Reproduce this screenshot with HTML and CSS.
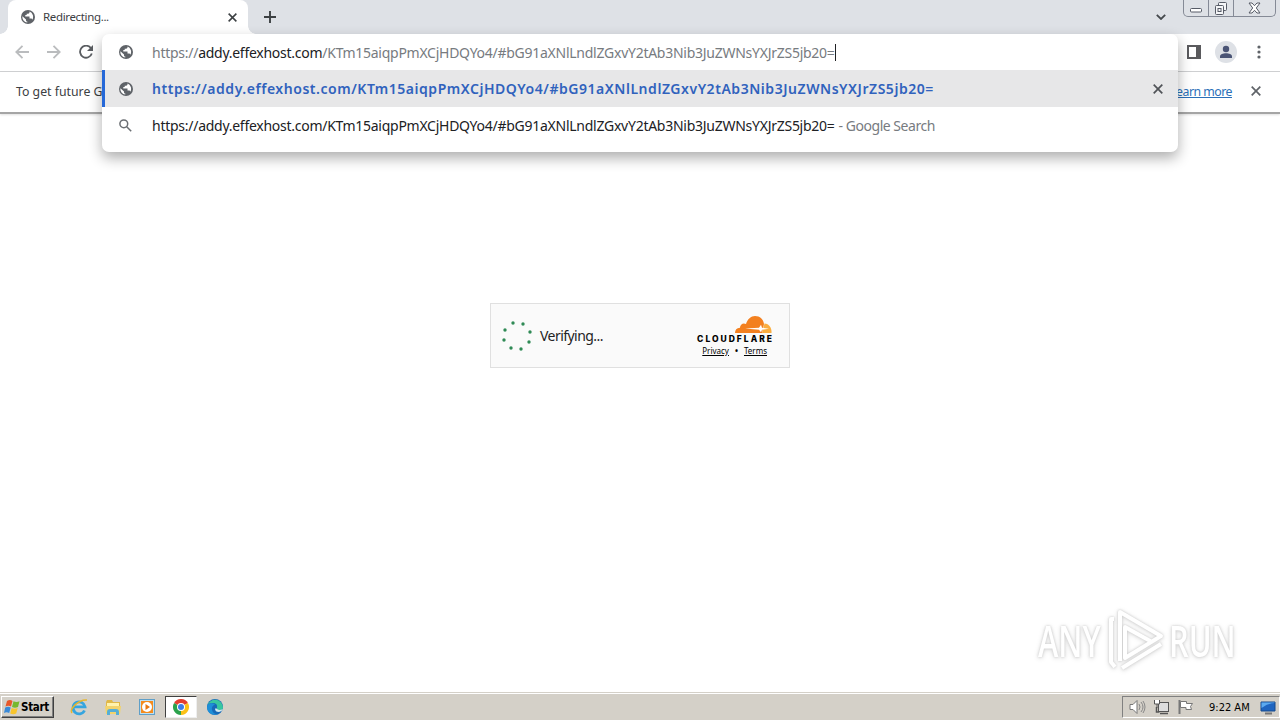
FILE: index.html
```html
<!DOCTYPE html>
<html lang="en">
    <head>
        <meta charset="utf-8">
        <title>Redirecting...</title>
        <link rel="stylesheet" href="styles.css">
    </head>
    <body>
        <svg class="defs">
            <symbol id="globe" viewBox="0 0 14 14">
                <circle cx="7" cy="7" r="7" fill="#5f6368" />
                <path d="M1.400 6.200 5 9.600v.7c0 .7.500 1.300 1.300 1.300v1A5.700 5.700 0 0 1 1.400 6.200zM8.500 1.600v.7c0 .8-.6 1.400-1.400 1.400H5.700v1.400H4.300v1.400h4.200v2.100h1.400c.7 0 1.300.5 1.400 1.200a5.700 5.700 0 0 0-2.800-8.200z" fill="#fff" />
            </symbol>
            <symbol id="cross" viewBox="0 0 10 10">
                <path d="M.7.7l8.600 8.600M9.300.7L.7 9.300" fill="none" stroke="currentColor" stroke-width="1.700" />
            </symbol>
        </svg>
        <div class="browser">
            <header class="tabstrip">
                <div class="tab">
                    <svg class="tab-icon"><use href="#globe" /></svg>
                    <span class="tab-title">Redirecting...</span>
                    <svg class="tab-close"><use href="#cross" /></svg>
                </div>
                <svg class="new-tab" viewBox="0 0 12 12"><path d="M6 0v12M0 6h12" stroke="#3c4043" stroke-width="1.900" /></svg>
                <svg class="tab-search" viewBox="0 0 10 6"><path d="M.8.8 5 5 9.200.8" fill="none" stroke="#45494d" stroke-width="1.800" /></svg>
                <div class="window-buttons">
                    <span class="wb wb-min"><svg width="13" height="6"><rect x=".5" y="1.500" width="11" height="3.500" rx="1" fill="#fff" stroke="#565b66" /></svg></span>
                    <span class="wb wb-max"><svg width="14" height="14"><g fill="#f4f5f7" stroke="#565b66"><rect x="4.500" y="1.500" width="8" height="8" rx="1" /><rect x="1.500" y="4.500" width="8" height="9" rx="1" /><rect x="4" y="7.500" width="3" height="3" /></g></svg></span>
                    <span class="wb wb-close"><svg width="13" height="12" viewBox="0 0 13 12"><path d="M1 1h3l2.500 2.700L9 1h3L8.300 6l3.700 5H9L6.500 8.300 4 11H1l3.700-5z" fill="#fff" stroke="#565b66" /></svg></span>
                </div>
            </header>
            <div class="toolbar">
                <svg class="nav-icon back" viewBox="0 0 14 14"><path d="M14 7H1.500M7.500.8 1.300 7l6.200 6.200" /></svg>
                <svg class="nav-icon forward" viewBox="0 0 14 14"><path d="M0 7h12.500M6.500.8 12.700 7l-6.200 6.200" /></svg>
                <svg class="nav-icon reload" viewBox="0 0 14 14"><path d="M11.800 3A6 6 0 1 0 12.800 8.500" /><path class="solid" d="M14 0v6H8z" /></svg>
                <div class="toolbar-right">
                    <svg width="14" height="14"><rect x="1" y="1" width="12" height="12" fill="#fff" stroke="#5a5a5d" stroke-width="2" /><rect x="9" y="0" width="5" height="14" fill="#5a5a5d" /></svg>
                    <svg class="avatar" width="22" height="22"><circle cx="11" cy="11" r="11" fill="#dee1e6" /><circle cx="11" cy="8" r="3.200" fill="#4a5475" /><path d="M5 17v-1.500c0-2 3-3.200 6-3.200s6 1.200 6 3.200V17z" fill="#4a5475" /></svg>
                    <svg width="4" height="14"><g fill="#5f6368"><circle cx="2" cy="2" r="1.600" /><circle cx="2" cy="7" r="1.600" /><circle cx="2" cy="12" r="1.600" /></g></svg>
                </div>
            </div>
            <div class="infobar">
                <span>To get future G</span>
                <a class="learn-more">Learn more</a>
                <svg class="info-close"><use href="#cross" /></svg>
            </div>
            <main class="page">
                <div class="challenge">
                    <svg class="spinner" viewBox="0 0 30 30">
                        <g fill="#2f8a55">
                            <circle cx="11" cy="2" r="1.700" /><circle cx="21" cy="3" r="1.700" /><circle cx="28" cy="11" r="1.700" /><circle cx="27" cy="21" r="1.700" />
                            <circle cx="19" cy="28" r="1.700" /><circle cx="9" cy="27" r="1.700" /><circle cx="2" cy="19" r="1.700" /><circle cx="3" cy="9" r="1.700" />
                        </g>
                    </svg>
                    <span class="verifying">Verifying...</span>
                    <div class="brand">
                        <svg class="cloud" viewBox="0 0 37 17">
                            <path d="M0 17c0-3 1.500-5 5-5.200C5 8 8.500 6.500 11 8 12.500 3 16 0 20 0c5 0 8.500 3.500 9 8l-2 9z" fill="#f38020" />
                            <path d="M27 17l2.500-9.500C34 7.500 37 12 36.500 17z" fill="#faae40" />
                            <path d="M10 12.600l14-.8 2-3 1 3 7 1-7 1-1 2.500-2-2.500z" fill="#fff" />
                        </svg>
                        <span class="brand-name">CLOUDFLARE</span>
                        <div class="brand-links"><a>Privacy</a><b>•</b><a>Terms</a></div>
                    </div>
                </div>
                <div class="watermark">
                    <span class="any">ANY</span>
                    <svg width="58" height="64" viewBox="0 0 58 64"><g fill="none" stroke="#fff" stroke-width="4" stroke-linejoin="round"><path d="M13 53V4l41 24-36 22V19l27 15" /><path d="M7 11H4v43l4 5M54 36 15 60" /></g></svg>
                    <span class="run">RUN</span>
                </div>
            </main>
        </div>
        <div class="omnibox">
            <div class="row input-row">
                <svg class="globe"><use href="#globe" /></svg>
                <span class="url muted">https://<span class="host">addy.effexhost.com</span>/KTm15aiqpPmXCjHDQYo4/#bG91aXNlLndlZGxvY2tAb3Nib3JuZWNsYXJrZS5jb20=</span><i class="caret"></i>
            </div>
            <div class="row selected">
                <svg class="globe"><use href="#globe" /></svg>
                <span class="url match">https://addy.effexhost.com/KTm15aiqpPmXCjHDQYo4/#bG91aXNlLndlZGxvY2tAb3Nib3JuZWNsYXJrZS5jb20=</span>
                <svg class="remove"><use href="#cross" /></svg>
            </div>
            <div class="row">
                <svg class="search" viewBox="0 0 13 13"><g fill="none" stroke="#6b6f73" stroke-width="1.500"><circle cx="4.800" cy="4.800" r="3.900" /><path d="M7.700 7.700l4.500 4.500" /></g></svg>
                <span class="url">https://addy.effexhost.com/KTm15aiqpPmXCjHDQYo4/#bG91aXNlLndlZGxvY2tAb3Nib3JuZWNsYXJrZS5jb20=</span><span class="hint">- Google Search</span>
            </div>
        </div>
        <footer class="taskbar">
            <div class="start">
                <svg width="17" height="16" viewBox="0 0 17 16"><path d="M3 2q3-2 5.500 0L7 7.500Q4.500 6 1.500 7.500z" fill="#e8582a" /><path d="M9.500 2.300q3 1.500 6 0L14 8q-3 1.500-6 0z" fill="#76b82d" /><path d="M1.200 8.500q3-1.700 5.500 0L5.200 14q-2.700-1.700-5.200 0z" fill="#3a8ad8" /><path d="M7.700 8.900q3 1.500 6 0l-1.500 5.500q-3 1.500-6 0z" fill="#f8c52d" /></svg>
                <span>Start</span>
            </div>
            <div class="apps">
                <div class="app"><svg width="18" height="18"><path d="M14.500 12.500A6 6 0 1 1 15 8.800H4" fill="none" stroke="#35a5df" stroke-width="2.800" /><path d="M2 15C-1 11 9 1 17 2" fill="none" stroke="#e8b62c" stroke-width="1.500" /></svg></div>
                <div class="app"><svg width="18" height="18"><path d="M2 4l1-2h5l1 2h7v11H2z" fill="#e0b848" /><path d="M3 5h12v5H3z" fill="#fff2ac" /><path d="M1 8h16l-1 8H2z" fill="#f2d36c" /><path d="M3 17v-3q0-3 3-3h6q3 0 3 3v3h-3v-3H6v3z" fill="#55aed6" /></svg></div>
                <div class="app"><svg width="18" height="18"><rect x="1.500" y="1.500" width="15" height="15" fill="#bee0f2" stroke="#5f9fc8" /><rect x="3" y="3" width="12" height="12" fill="#f48b1d" /><circle cx="9" cy="9" r="5" fill="#fff" /><path d="M7.500 6l4.500 3-4.500 3z" fill="#e87710" /></svg></div>
                <div class="app active"><svg width="16" height="16"><path d="M8 8 1.070 4A8 8 0 0 1 14.930 4z" fill="#e43e2f" /><path d="M8 8l6.930-4A8 8 0 0 1 8 16z" fill="#fbc116" /><path d="M8 8v8A8 8 0 0 1 1.070 4z" fill="#2ba24c" /><circle cx="8" cy="8" r="4" fill="#fff" /><circle cx="8" cy="8" r="3" fill="#3d7de8" /></svg></div>
                <div class="app"><svg width="18" height="18"><circle cx="9" cy="9" r="8" fill="#1769b8" /><path d="M1.500 7a8 8 0 0 1 15.500 2q0 4-5 3-2-.5-1-2 1-5-4.500-5Q3 5 1.500 7z" fill="#38c6a0" /><path d="M1.500 7Q5 4 9 6.500 5 8 6 12q1 4 6 4.500Q2 18 1 10z" fill="#1e8fd8" /><path d="M10.500 10.500q2 2.500 6.500.5-1 2.500-4 3-4 0-4-3.500z" fill="#d3e9f1" /></svg></div>
            </div>
            <div class="tray">
                <svg width="17" height="16"><path d="M1 5.500h3l4-4v13l-4-4H1z" fill="#fff" stroke="#777" /><path d="M10 5q2 3 0 6M12 3q4 5 0 10M14 2q4 6 0 12" fill="none" stroke="#888" /></svg>
                <svg width="17" height="16"><rect x="5.500" y="3.500" width="10" height="9" fill="#ddd" stroke="#555" /><path d="M7 14.500h8M3.500 8v5h3" fill="none" stroke="#555" stroke-width="1.500" /><path d="M1.500 1v4h5V1M4 5v4" fill="#fff" stroke="#555" /></svg>
                <svg width="17" height="16"><path d="M2.500 1v14" stroke="#777" stroke-width="2" /><path d="M3.500 2.500h6v2h6l-2 3 1 3H9v-2H3.500z" fill="#fff" stroke="#777" /></svg>
                <span class="clock">9:22 AM</span>
                <svg width="16" height="15"><path d="M1 2h14v9H1z" fill="#1f65c0" stroke="#174a8b" /><path d="M1.500 8Q8 3 14.500 3v-.5h-13z" fill="#5baaf0" /><path d="M5 13.500h7" stroke="#777" stroke-width="2" /></svg>
            </div>
        </footer>
    </body>
</html>
```

FILE: styles.css
```css
* {
    box-sizing: border-box;
}

body {
    display: flex;
    flex-direction: column;
    width: 1280px;
    height: 720px;
    margin: 0;
    overflow: hidden;
    background: #fff;
    color: #202124;
    font-family: "Noto Sans", sans-serif;
    font-size: 14px;
}

svg {
    display: block;
    flex-shrink: 0;
}

.defs {
    position: absolute;
    width: 0;
    height: 0;
}

.browser {
    flex: 1;
    display: flex;
    flex-direction: column;
    min-height: 0;
}

.tabstrip {
    display: flex;
    height: 34px;
    padding-left: 8px;
    background: #dee1e6;
}

.tab {
    position: relative;
    display: flex;
    align-items: center;
    width: 240px;
    padding: 0 11px 0 13px;
    background: #fff;
    border-radius: 8px 8px 0 0;
}

/* flared feet of the active tab */
.tab::before,
.tab::after {
    content: "";
    position: absolute;
    bottom: 0;
    width: 8px;
    height: 8px;
}

.tab::before {
    left: -8px;
    background: radial-gradient(circle at 0 0, #dee1e6 7.5px, #fff 8px);
}

.tab::after {
    right: -8px;
    background: radial-gradient(circle at 100% 0, #dee1e6 7.5px, #fff 8px);
}

.tab-icon,
.globe {
    width: 14px;
    height: 14px;
}

.tab-title {
    flex: 1;
    margin: -1px 0 0 8px;
    font-size: 11.5px;
    letter-spacing: -0.35px;
    color: #3c4043;
}

.tab-close {
    width: 9px;
    height: 9px;
    color: #3c4043;
}

.new-tab {
    width: 12px;
    height: 12px;
    margin: 11px 0 0 16px;
}

.tab-search {
    width: 10px;
    height: 6px;
    margin: 14px 17px 0 auto;
}

.window-buttons {
    display: flex;
    width: 93px;
    height: 17px;
    margin-right: 4px;
    border: 1px solid #858a96;
    border-top: 0;
    border-radius: 0 0 5px 5px;
}

.wb {
    display: flex;
    align-items: center;
    justify-content: center;
    border-right: 1px solid #858a96;
}

.wb-min {
    width: 25px;
    padding-top: 4px;
}

.wb-max {
    width: 25px;
}

.wb-close {
    flex: 1;
    border-right: 0;
}

.toolbar {
    display: flex;
    align-items: center;
    height: 38px;
    padding: 0 19px 2px 15px;
    border-bottom: 1px solid #d0d1d3;
}

.nav-icon {
    width: 14px;
    height: 14px;
    margin-right: 18px;
    fill: none;
    stroke: #babcbe;
    stroke-width: 1.8;
}

.reload {
    stroke: #5a5d61;
}

.solid {
    fill: #5a5d61;
    stroke: none;
}

.toolbar-right {
    display: flex;
    align-items: center;
    margin-left: auto;
}

.avatar {
    margin: 0 20px 0 14px;
}

.infobar {
    display: flex;
    align-items: center;
    height: 42px;
    padding: 0 19px 2px 16px;
    border-bottom: 2px solid #a5a5a5;
    box-shadow: 0 1px 2px rgba(0, 0, 0, 0.12);
    font-size: 12.3px;
    color: #3c4043;
}

.learn-more {
    margin-left: auto;
    letter-spacing: -0.5px;
    color: #2a6fb8;
    text-decoration: underline;
}

.info-close {
    width: 10px;
    height: 10px;
    margin-left: 19px;
    color: #5f6368;
}

.page {
    flex: 1;
    display: flex;
    flex-direction: column;
    align-items: center;
    padding-top: 189px;
}

.challenge {
    display: flex;
    align-items: center;
    width: 300px;
    height: 65px;
    padding: 0 17px 0 11px;
    background: #fafafa;
    border: 1px solid #e0e0e0;
}

.spinner {
    width: 30px;
    height: 30px;
}

.verifying {
    margin-left: 8px;
    letter-spacing: -0.55px;
    color: #232323;
}

.brand {
    display: flex;
    flex-direction: column;
    align-items: flex-end;
    width: 77px;
    margin-left: auto;
    padding-top: 1px;
}

.cloud {
    width: 37px;
    height: 17px;
}

.brand-name {
    font: 800 8.5px/12px Inter, sans-serif;
    letter-spacing: 2px;
    margin-right: -2px;
    color: #000;
}

.brand-links {
    display: flex;
    gap: 6px;
    margin-right: 5px;
    font-size: 8px;
    line-height: 11px;
    color: #000;
}

.brand-links a {
    text-decoration: underline;
}

.watermark {
    display: flex;
    align-items: center;
    align-self: flex-end;
    margin: auto 47px 20px 0;
    color: #fff;
    font: 600 44px/64px "Open Sans", sans-serif;
    filter: drop-shadow(0 0 1px #ccc) drop-shadow(0 1px 2px #ddd);
}

.any,
.run {
    display: block;
    width: 64px;
    transform-origin: left center;
    transform: scaleX(0.7);
}

.watermark svg {
    margin: 0 4px 0 5px;
}

.omnibox {
    position: absolute;
    left: 102px;
    top: 34px;
    width: 1076px;
    height: 118px;
    background: #fff;
    border-radius: 7px;
    box-shadow: 0 6px 14px rgba(0, 0, 0, 0.32);
}

.row {
    display: flex;
    align-items: center;
    height: 37px;
    padding: 0 15px 0 17px;
}

.input-row {
    height: 36px;
}

.selected {
    padding-left: 14px;
    background: #e7e7e8;
    border-left: 3px solid #2568d8;
}

.url {
    margin-left: 19px;
    letter-spacing: -0.263px;
    white-space: pre;
}

.muted {
    color: #777b7f;
}

.host {
    color: #202124;
}

.match {
    font-weight: 600;
    letter-spacing: 0.54px;
    color: #3062bd;
}

.caret {
    width: 1px;
    height: 17px;
    background: #202124;
}

.remove {
    width: 10px;
    height: 10px;
    margin-left: auto;
    color: #505357;
}

.search {
    width: 13px;
    height: 13px;
    margin-right: 1px;
}

.hint {
    margin-left: 4px;
    letter-spacing: -0.47px;
    color: #777b7f;
}

.taskbar {
    display: flex;
    align-items: center;
    height: 28px;
    padding: 1px 0 0 1px;
    background: #d4d0c8;
    border-top: 1px solid #d4d0c8;
    box-shadow: inset 0 1px #fff;
}

.start {
    display: flex;
    align-items: center;
    width: 53px;
    height: 22px;
    padding-left: 2px;
    border: 1px solid;
    border-color: #fff #404040 #404040 #fff;
    box-shadow: inset -1px -1px #808080;
    font: bold 11.5px "DejaVu Sans Condensed", sans-serif;
    color: #000;
}

.start span {
    letter-spacing: -0.3px;
}

.apps {
    display: flex;
    align-items: center;
    margin-left: 9px;
    gap: 2px;
}

.app {
    display: flex;
    align-items: center;
    justify-content: center;
    width: 32px;
    height: 22px;
}

.active {
    background: #fff;
    border: 1px solid;
    border-color: #404040 #eee #eee #404040;
}

.tray {
    display: flex;
    align-items: center;
    width: 158px;
    height: 22px;
    margin-left: auto;
    padding: 0 3px 0 6px;
    gap: 7px;
    border: 1px solid;
    border-color: #808080 #fff #fff #808080;
}

.clock {
    flex: 1;
    margin-left: 8px;
    font: 11px "DejaVu Sans Condensed", sans-serif;
    white-space: nowrap;
    color: #000;
}
```
